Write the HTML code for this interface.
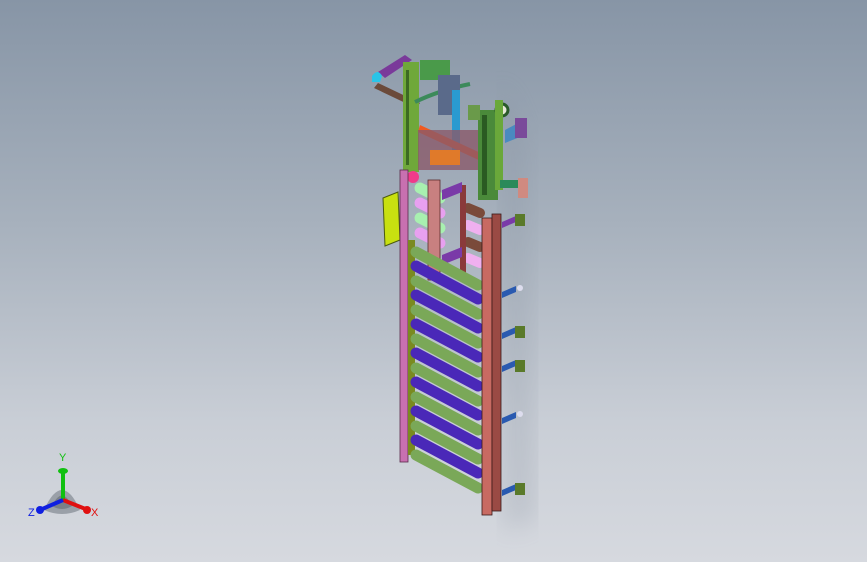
<!DOCTYPE html>
<html><head><style>
html,body{margin:0;padding:0;width:867px;height:562px;overflow:hidden}
body{background:linear-gradient(180deg,#8795a6 0%,#a7b1bd 40%,#c9ced6 75%,#d6d9df 100%)}
svg{position:absolute;left:0;top:0}
</style></head><body>
<svg width="867" height="562" viewBox="0 0 867 562">
<defs><filter id="sh"><feGaussianBlur stdDeviation="12"/></filter></defs>
<!-- shadow -->
<path d="M500 80 L525 140 L535 520 L505 530 Z" fill="#7d8795" opacity="0.22" filter="url(#sh)"/>
<!-- top frame -->
<path d="M378 72 L405 55 L412 60 L385 78 Z" fill="#7a3a9a"/>
<path d="M372 76 q6-8 10 0 l-2 6 -8 0z" fill="#2ac4e8"/>
<path d="M378 83 L420 103 L416 108 L374 88 Z" fill="#6b4a3a"/>
<rect x="403" y="62" width="16" height="110" fill="#6fa83a"/>
<rect x="406" y="70" width="3" height="95" fill="#3c6a22"/>
<path d="M415 102 q25-12 55-18" stroke="#3c8a5a" stroke-width="4" fill="none"/>
<rect x="420" y="60" width="30" height="20" fill="#4a9a4a"/>
<rect x="438" y="75" width="22" height="40" fill="#5a6a8a"/>
<rect x="452" y="90" width="8" height="60" fill="#2a9ad0"/>
<path d="M420 125 L485 155 L483 162 L418 132 Z" fill="#f05a20"/>
<rect x="418" y="130" width="60" height="40" fill="#8a5a6a" opacity="0.8"/>
<rect x="430" y="150" width="30" height="15" fill="#e07a2a"/>
<rect x="478" y="110" width="20" height="90" fill="#4a8a3a"/>
<rect x="482" y="115" width="5" height="80" fill="#2a5a22"/>
<circle cx="502" cy="110" r="6" fill="#e8e8d8" stroke="#2a5a2a" stroke-width="3"/>
<rect x="495" y="100" width="8" height="90" fill="#6aa83a"/>
<path d="M505 130 l15-8 0 15 -15 6z" fill="#4a8ac0"/>
<rect x="515" y="118" width="12" height="20" fill="#7a4a9a"/>
<rect x="500" y="180" width="22" height="8" fill="#2a8a5a"/>
<rect x="518" y="178" width="10" height="20" fill="#d08a80"/>
<rect x="468" y="105" width="12" height="15" fill="#6a9a4a"/>
<circle cx="413" cy="177" r="6" fill="#f03a8a"/>
<!-- yellow box -->
<path d="M383 198 L398 192 L400 240 L385 246 Z" fill="#c8e010" stroke="#4a5a10" stroke-width="1"/>
<!-- left rail -->
<rect x="400" y="170" width="8" height="292" fill="#c870b0" stroke="#5a2a4a" stroke-width="0.8"/>
<rect x="408" y="240" width="7" height="215" fill="#7a8a20"/>
<!-- upper rollers -->
<g stroke-linecap="round">
<line x1="420" y1="188" x2="440" y2="198" stroke="#a8f0b0" stroke-width="11"/>
<line x1="420" y1="203" x2="440" y2="213" stroke="#e8a0f0" stroke-width="11"/>
<line x1="420" y1="218" x2="440" y2="228" stroke="#a8f0b0" stroke-width="11"/>
<line x1="420" y1="233" x2="440" y2="243" stroke="#e8a0f0" stroke-width="11"/>
<line x1="468" y1="208" x2="480" y2="213" stroke="#7a4a3a" stroke-width="10"/>
<line x1="468" y1="225" x2="480" y2="230" stroke="#f0b0f0" stroke-width="10"/>
<line x1="468" y1="242" x2="480" y2="247" stroke="#7a4a3a" stroke-width="10"/>
<line x1="468" y1="258" x2="480" y2="263" stroke="#f0b0f0" stroke-width="10"/>
</g>
<rect x="428" y="180" width="12" height="100" fill="#c88080" stroke="#5a2a2a" stroke-width="0.8"/>
<rect x="460" y="185" width="6" height="95" fill="#8a3a3a"/>
<path d="M442 190 l20-8 0 10 -20 8z" fill="#7a3aa8"/>
<path d="M442 255 l20-8 0 10 -20 8z" fill="#7a3aa8"/>
<!-- rollers -->
<g stroke-linecap="round" stroke-width="11">
<line x1="416" y1="252" x2="478" y2="285" stroke="#7aa858"/>
<line x1="416" y1="266" x2="478" y2="299" stroke="#4a28b8"/>
<line x1="416" y1="281" x2="478" y2="314" stroke="#7aa858"/>
<line x1="416" y1="295" x2="478" y2="328" stroke="#4a28b8"/>
<line x1="416" y1="310" x2="478" y2="343" stroke="#7aa858"/>
<line x1="416" y1="324" x2="478" y2="357" stroke="#4a28b8"/>
<line x1="416" y1="339" x2="478" y2="372" stroke="#7aa858"/>
<line x1="416" y1="353" x2="478" y2="386" stroke="#4a28b8"/>
<line x1="416" y1="368" x2="478" y2="401" stroke="#7aa858"/>
<line x1="416" y1="382" x2="478" y2="415" stroke="#4a28b8"/>
<line x1="416" y1="397" x2="478" y2="430" stroke="#7aa858"/>
<line x1="416" y1="411" x2="478" y2="444" stroke="#4a28b8"/>
<line x1="416" y1="426" x2="478" y2="459" stroke="#7aa858"/>
<line x1="416" y1="440" x2="478" y2="473" stroke="#4a28b8"/>
<line x1="416" y1="455" x2="478" y2="488" stroke="#7aa858"/>
</g>
<!-- right posts -->
<rect x="482" y="218" width="10" height="297" fill="#c86a62" stroke="#3a1a1a" stroke-width="0.8"/>
<rect x="492" y="214" width="9" height="297" fill="#9a4a44" stroke="#3a1a1a" stroke-width="0.8"/>
<!-- brackets -->
<g fill="#2a5ab0">
<path d="M502 292 l14-6 0 6 -14 6z"/><circle cx="520" cy="288" r="3" fill="#dde"/>
<path d="M502 333 l14-6 0 6 -14 6z"/><rect x="515" y="326" width="10" height="12" fill="#5a7a2a"/>
<path d="M502 366 l14-6 0 6 -14 6z"/><rect x="515" y="360" width="10" height="12" fill="#5a7a2a"/>
<path d="M502 418 l14-6 0 6 -14 6z"/><circle cx="520" cy="414" r="3" fill="#dde"/>
<path d="M502 490 l14-6 0 6 -14 6z"/><rect x="515" y="483" width="10" height="12" fill="#5a7a2a"/>
<path d="M502 222 l14-6 0 6 -14 6z" fill="#7a3aa8"/><rect x="515" y="214" width="10" height="12" fill="#5a7a2a"/>
</g>
<!-- triad -->
<path d="M44 510 Q62 470 80 510 Q62 518 44 510Z" fill="#9aa0a8"/>
<path d="M52 506 Q62 485 72 506 Q62 512 52 506Z" fill="#7a8088"/>
<line x1="63" y1="500" x2="63" y2="472" stroke="#10c010" stroke-width="4"/>
<ellipse cx="63" cy="471" rx="5" ry="3" fill="#10c010"/>
<line x1="63" y1="500" x2="88" y2="510" stroke="#e01010" stroke-width="4"/>
<circle cx="87" cy="510" r="4" fill="#e01010"/>
<line x1="63" y1="500" x2="40" y2="510" stroke="#1020e0" stroke-width="4"/>
<circle cx="40" cy="510" r="4" fill="#1020e0"/>
<text x="59" y="461" font-family="Liberation Sans,sans-serif" font-size="11" fill="#10c010">Y</text>
<text x="91" y="516" font-family="Liberation Sans,sans-serif" font-size="11" fill="#e01010">X</text>
<text x="28" y="516" font-family="Liberation Sans,sans-serif" font-size="11" fill="#1020e0">Z</text>
</svg>
</body></html>
